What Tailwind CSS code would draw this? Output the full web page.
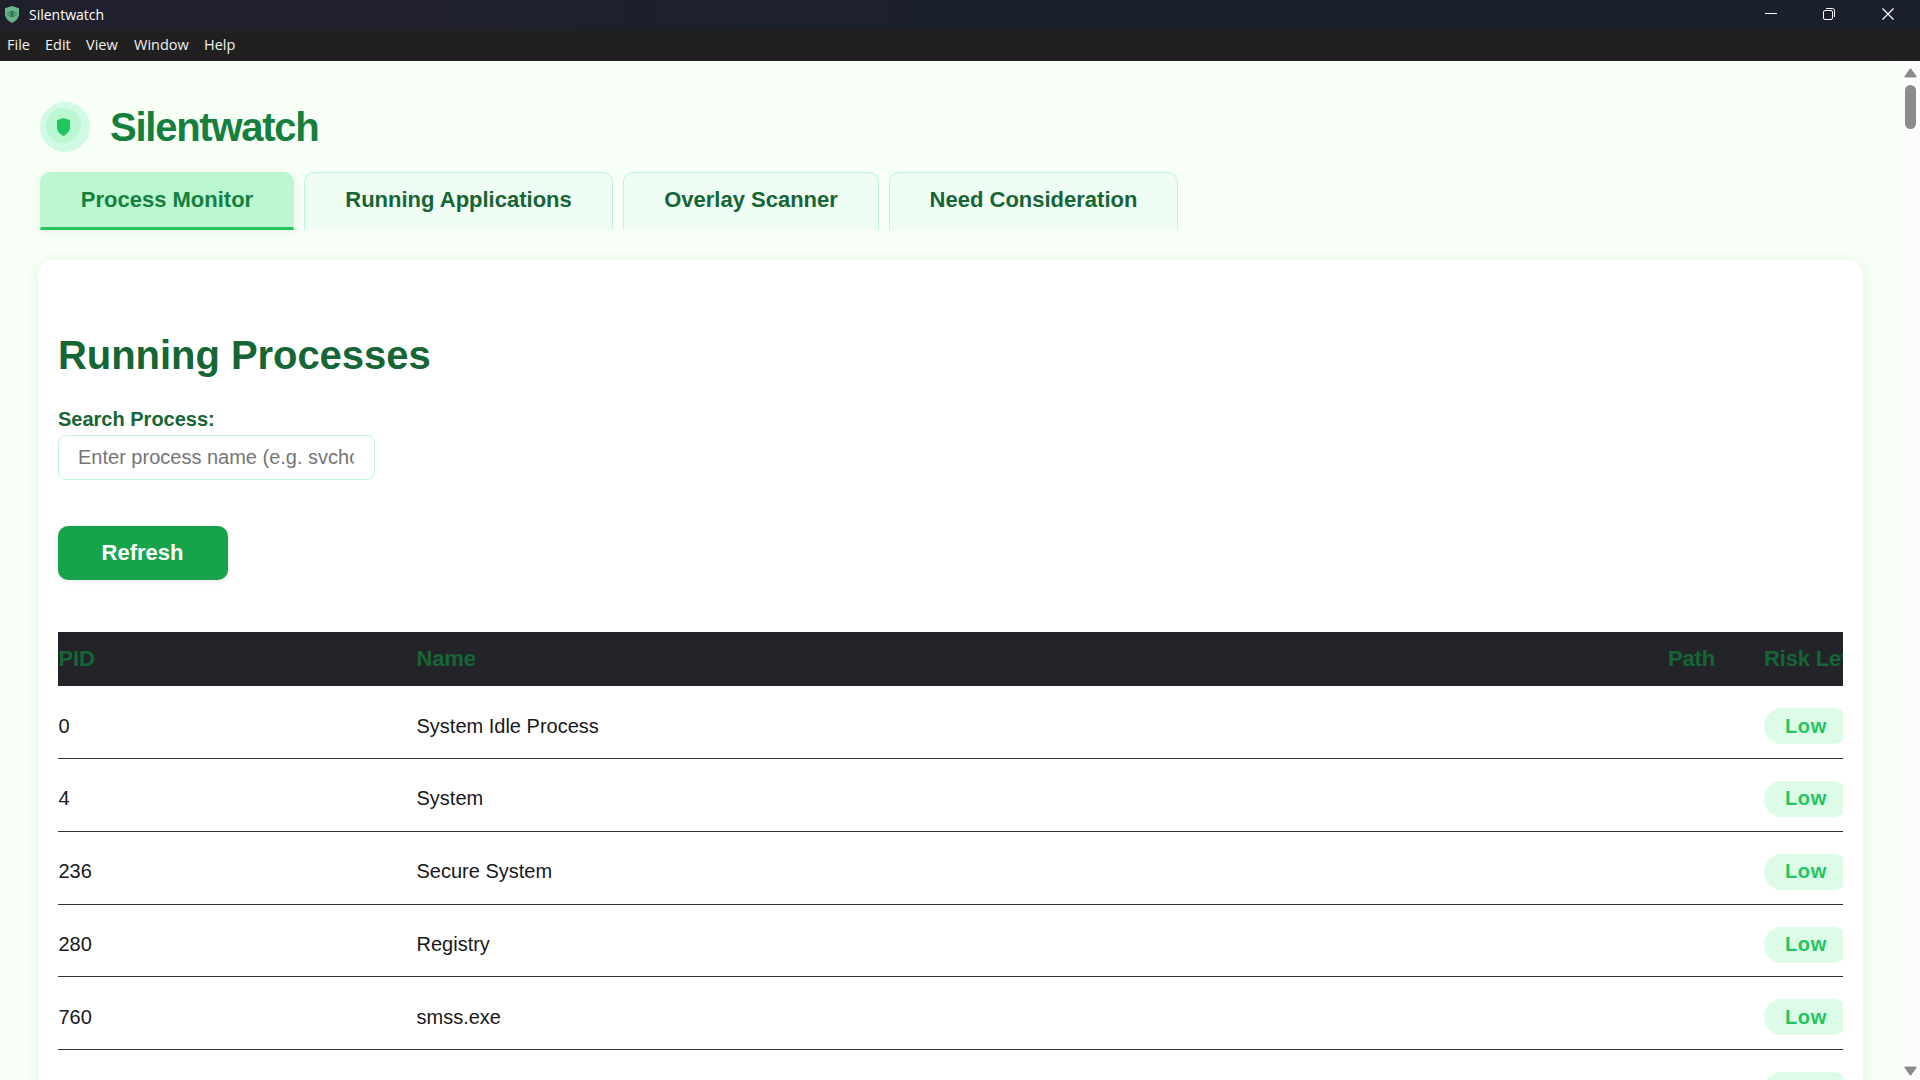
<!DOCTYPE html>
<html lang="en">
<head>
<meta charset="utf-8">
<title>Silentwatch</title>
<script src="https://cdn.jsdelivr.net/npm/@tailwindcss/browser@4"></script>
</head>
<body class="flex h-[1080px] w-[1920px] flex-col overflow-hidden bg-[#f7fff7] font-['Liberation_Sans',Arial,sans-serif] text-[20px] text-[#18181b]">
<header class="flex h-[29px] shrink-0 items-center bg-linear-to-r from-[#20202c] from-15% to-[#1b212c] to-50% font-['Open_Sans','Noto_Sans',sans-serif] text-[14px] text-white">
  <svg class="ml-[5px] h-[17px] w-[14px]" viewBox="0 0 14 17"><path d="M7 0 14 2.2V8c0 4-3 7-7 9-4-2-7-5-7-9V2.2z" fill="#69b58a"/><path d="M2.3 8Q7 2.8 11.7 8 7 13.200 2.300 8z" fill="none" stroke="#27704b"/><circle cx="7" cy="8" r="1.900" fill="#27704b"/></svg>
  <span class="ml-[10px]">Silentwatch</span>
  <div class="ml-auto flex items-center">
    <svg class="h-[29px] w-[59px]" viewBox="0 0 59 29" fill="none" stroke="#fff"><path d="M24 13.500h12"/></svg>
    <svg class="h-[29px] w-[59px]" viewBox="0 0 59 29" fill="none" stroke="#fff"><rect x="23.500" y="10.500" width="9" height="9" rx="1.500"/><path d="M26 8.500h6.500a2 2 0 0 1 2 2V17"/></svg>
    <svg class="h-[29px] w-[61px]" viewBox="0 0 61 29" fill="none" stroke="#fff" stroke-width="1.200"><path d="m23.500 8.500 11 11m0-11-11 11"/></svg>
  </div>
</header>
<nav class="flex h-[32px] shrink-0 items-center gap-[15px] bg-[#202020] pl-[7px] font-['Open_Sans','Noto_Sans',sans-serif] text-[14.500px] text-[#f0f0f0]">
  <span class="w-[23px]">File</span><span class="w-[26px]">Edit</span><span class="w-[33px]">View</span><span class="w-[55px]">Window</span><span>Help</span>
</nav>
<div class="flex min-h-0 flex-1">
  <main class="flex min-w-0 flex-1 flex-col overflow-hidden pl-[38px] pr-[38px]">
    <div class="mt-[41px] ml-[2px] flex h-[50px] shrink-0 items-center">
      <div class="h-[50px] w-[50px] rounded-full bg-[#d1fae5] pt-[6px] pl-[6px]">
        <div class="h-[35px] w-[35px] rounded-full bg-[#bbf7d0] pt-[10px] pl-[11px]">
          <svg class="h-[18px] w-[13px]" viewBox="0 0 13 18"><path d="M6.500 0 13 2.200V9c0 4-2.500 7-6.500 9C2.500 16 0 13 0 9V2.200z" fill="#22c55e"/></svg>
        </div>
      </div>
      <h1 class="ml-5 text-[40px] leading-[50px] font-bold tracking-[-1.250px] text-[#15803d]">Silentwatch</h1>
    </div>
    <div class="mt-5 ml-[2px] flex h-[58px] shrink-0 gap-[10px] text-[22px] leading-[25px] font-bold whitespace-nowrap text-[#166534]">
      <div class="w-[254px] rounded-t-[10px] border border-b-[3px] border-[#bbf7d0] border-b-[#22c55e] bg-[#bbf7d0] pt-[14px] text-center text-[#15803d] shadow-[0_2px_10px_rgba(22,101,52,0.08)]">Process Monitor</div>
      <div class="w-[309px] rounded-t-[10px] border border-b-0 border-[#bbf7d0] bg-[#f0fdf4] pt-[14px] text-center">Running Applications</div>
      <div class="w-[256px] rounded-t-[10px] border border-b-0 border-[#bbf7d0] bg-[#f0fdf4] pt-[14px] text-center">Overlay Scanner</div>
      <div class="w-[289px] rounded-t-[10px] border border-b-0 border-[#bbf7d0] bg-[#f0fdf4] pt-[14px] text-center">Need Consideration</div>
    </div>
    <section class="mt-[30px] h-[900px] shrink-0 rounded-[15px] bg-white px-5 pt-[70px] shadow-[0_2px_15px_rgba(22,101,52,0.08)]">
      <h2 class="text-[40px] leading-[50px] font-bold tracking-[-0.050px] text-[#166534]">Running Processes</h2>
      <label class="mt-[27px] block leading-[24px] font-bold text-[#166534]">Search Process:</label>
      <div class="mt-1 h-[45px] w-[317px] rounded-[8px] border border-[#bbf7d0] pr-5 pl-[19px]">
        <input class="block h-[43px] w-full bg-transparent outline-none placeholder:text-[#757575]" placeholder="Enter process name (e.g. svchost)">
      </div>
      <button class="mt-[46px] block h-[54px] w-[170px] rounded-[10px] bg-[#16a34a] pr-px pb-[2px] text-[22px] font-bold text-white shadow-[0_2px_5px_rgba(0,0,0,0.06)]">Refresh</button>
      <div class="mt-[52px] overflow-hidden">
        <div class="grid h-[54px] w-[1846px] grid-cols-[358px_1252px_96px_140px] bg-[#232429] text-[22px] leading-[54px] font-bold tracking-[-0.150px] whitespace-nowrap text-[#166534]">
          <span class="pl-[0.500px]">PID</span><span class="pl-[0.500px]">Name</span><span>Path</span><span>Risk Level</span>
        </div>
        <div id="rows"></div>
      </div>
    </section>
  </main>
  <div class="flex w-[19px] shrink-0 flex-col items-center bg-[#fcfcfc] pt-[7px] pb-1">
    <svg class="h-[10px] w-[13px]" viewBox="0 0 13 10"><path d="M6.500 1.500 11.500 8.500h-10z" fill="#8b8b8b" stroke="#8b8b8b" stroke-width="2" stroke-linejoin="round"/></svg>
    <div class="mt-[7px] h-[44px] w-[11px] rounded-full bg-[#8b8b8b]"></div>
    <svg class="mt-auto h-[10px] w-[13px]" viewBox="0 0 13 10"><path d="M6.500 8.500 11.500 1.500h-10z" fill="#8b8b8b" stroke="#8b8b8b" stroke-width="2" stroke-linejoin="round"/></svg>
  </div>
</div>
<script>
const processes = [[0, 'System Idle Process', 73, 36], [4, 'System', 73, 34], [236, 'Secure System', 73, 34], [280, 'Registry', 72, 34], [760, 'smss.exe', 73, 36], ['', '', 73, 36]];
document.getElementById('rows').innerHTML = processes.map(([pid, name, height, leading]) => `
  <div class="grid w-[1846px] grid-cols-[358px_1252px_96px_140px] border-b border-[#333338]" style="height:${height}px;line-height:${leading}px">
    <span class="pt-[22px] pl-[0.500px]">${pid}</span><span class="pt-[22px] pl-[0.500px]">${name}</span><span></span>
    <span class="mt-[22px] h-[36px] w-[86px] rounded-[18px] bg-[#dcfce7] pl-[21px] font-bold tracking-[0.625px] text-[#22c55e]">${name ? 'Low' : ''}</span>
  </div>`).join('');
</script>
</body>
</html>
